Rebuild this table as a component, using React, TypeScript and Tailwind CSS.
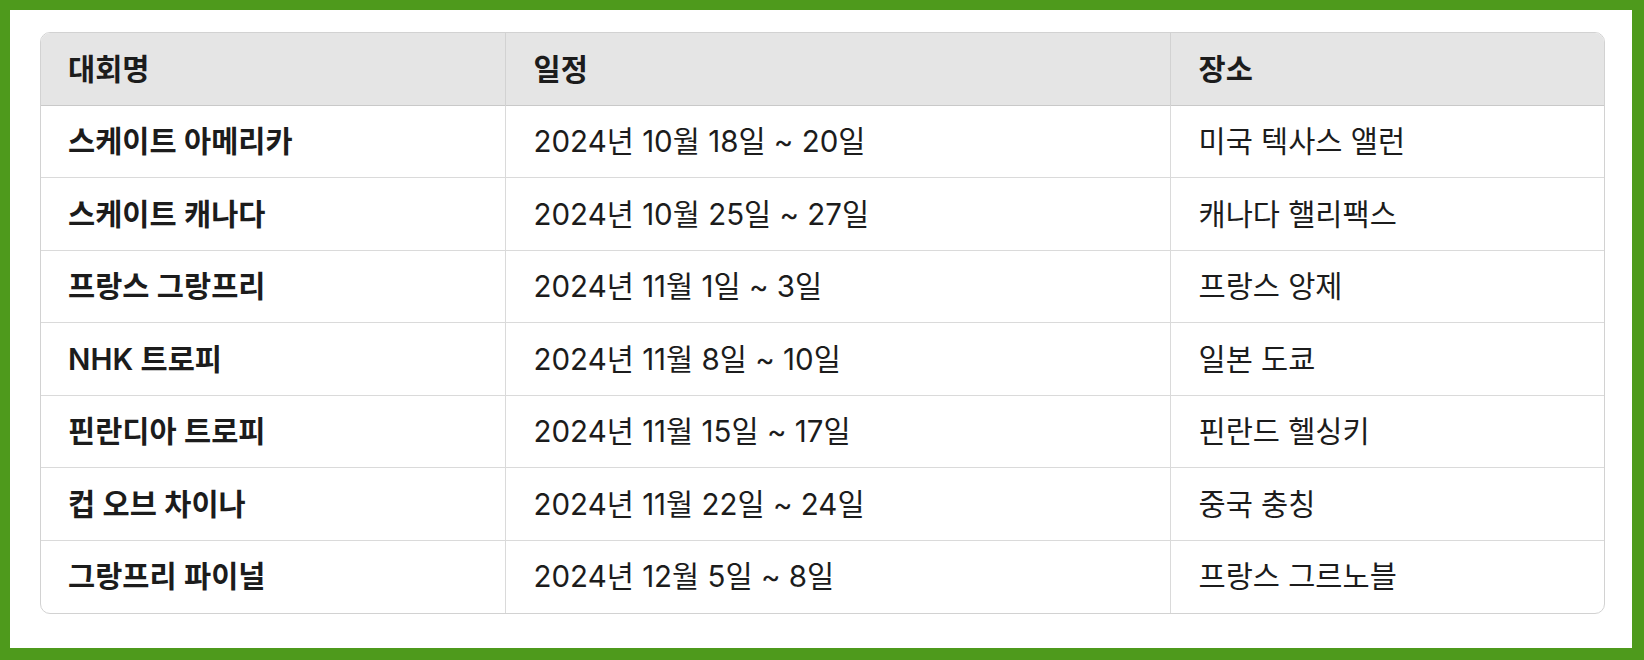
const rows = [
  { name: '스케이트 아메리카', date: '2024년 10월 18일 ~ 20일', place: '미국 텍사스 앨런' },
  { name: '스케이트 캐나다', date: '2024년 10월 25일 ~ 27일', place: '캐나다 핼리팩스' },
  { name: '프랑스 그랑프리', date: '2024년 11월 1일 ~ 3일', place: '프랑스 앙제' },
  { name: 'NHK 트로피', date: '2024년 11월 8일 ~ 10일', place: '일본 도쿄' },
  { name: '핀란디아 트로피', date: '2024년 11월 15일 ~ 17일', place: '핀란드 헬싱키' },
  { name: '컵 오브 차이나', date: '2024년 11월 22일 ~ 24일', place: '중국 충칭' },
  { name: '그랑프리 파이널', date: '2024년 12월 5일 ~ 8일', place: '프랑스 그르노블' },
];

const App = () => {
  return (
    <div className="w-[1644px] h-[660px] bg-[#4e9a1c] pt-[10px] pl-[10px] pr-[12px] pb-[12px]">
      <div
        className="h-full bg-white pt-[22px] pl-[30px] pr-[27px] text-[#1c1c1c]"
        style={{ fontFamily: 'Inter, "Noto Sans CJK KR", sans-serif' }}
      >
        <div className="w-[1565px] rounded-[10px] border border-[#d2d2d2] overflow-hidden">
          <table className="w-full border-collapse table-fixed text-[29.5px]">
            <colgroup>
              <col className="w-[464px]" />
              <col className="w-[665px]" />
              <col className="w-[436px]" />
            </colgroup>
            <thead>
              <tr className="h-[72px] bg-[#e5e5e5] border-b border-[#c9c9c9]">
                <th className="pl-[27px] text-left font-semibold">대회명</th>
                <th className="pl-[28px] text-left font-semibold border-l border-[#d2d2d2]">일정</th>
                <th className="pl-[28px] text-left font-semibold border-l border-[#d2d2d2]">장소</th>
              </tr>
            </thead>
            <tbody>
              {rows.map((row, i) => (
                <tr key={i} className="h-[72.5px] border-t border-[#dadada]">
                  <td className="pl-[27px] font-semibold">{row.name}</td>
                  <td className="pl-[28px] border-l border-[#dadada]">{row.date}</td>
                  <td className="pl-[28px] border-l border-[#dadada]">{row.place}</td>
                </tr>
              ))}
            </tbody>
          </table>
        </div>
      </div>
    </div>
  );
};

export default App;
